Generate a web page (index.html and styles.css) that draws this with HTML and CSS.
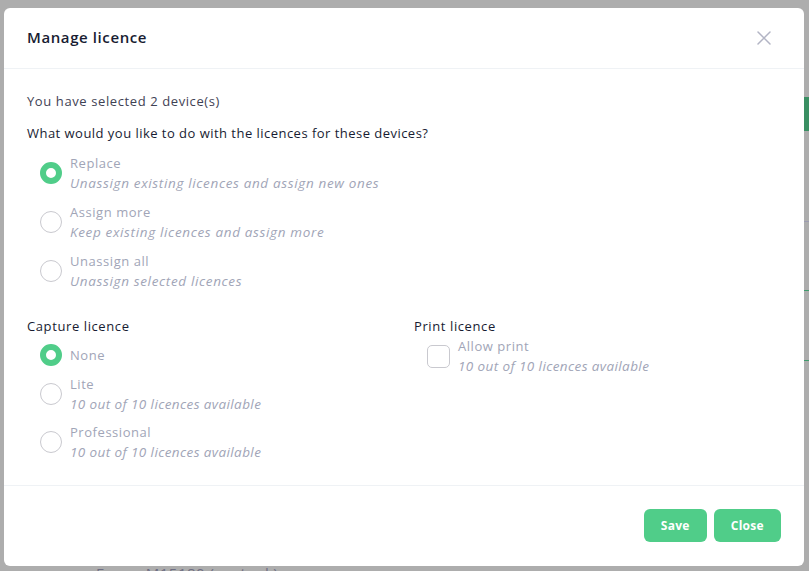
FILE: index.html
```html
<!DOCTYPE html>
<html lang="en">
<head>
<meta charset="utf-8">
<title>Manage licence</title>
<link rel="stylesheet" href="styles.css">
</head>
<body>
<div class="backdrop">
  <div class="peek-btn"></div>
  <div class="peek-line l1"></div>
  <div class="peek-line l2"></div>
  <div class="peek-line l3"></div>
  <div class="peek-text">Epson M15180 (ecotank)</div>
</div>
<div class="modal">
  <div class="modal-header">
    <h2 class="modal-title">Manage licence</h2>
    <button class="close-x" aria-label="Close">
      <svg width="14" height="14" viewBox="0 0 14 14"><path d="M1 1 L13 13 M13 1 L1 13" stroke="#b2b4c4" stroke-width="1.5" stroke-linecap="round"/></svg>
    </button>
  </div>
  <div class="modal-body">
    <p class="info">You have selected 2 device(s)</p>
    <p class="question">What would you like to do with the licences for these devices?</p>
    <div class="options">
      <label class="opt">
        <span class="radio checked"></span>
        <span class="opt-text"><span class="opt-label">Replace</span><span class="opt-desc">Unassign existing licences and assign new ones</span></span>
      </label>
      <label class="opt">
        <span class="radio"></span>
        <span class="opt-text"><span class="opt-label">Assign more</span><span class="opt-desc">Keep existing licences and assign more</span></span>
      </label>
      <label class="opt">
        <span class="radio"></span>
        <span class="opt-text"><span class="opt-label">Unassign all</span><span class="opt-desc">Unassign selected licences</span></span>
      </label>
    </div>
    <div class="cols">
      <div class="col">
        <h3 class="section">Capture licence</h3>
        <div class="options sub">
          <label class="opt">
            <span class="radio checked"></span>
            <span class="opt-text"><span class="opt-label">None</span></span>
          </label>
          <label class="opt">
            <span class="radio"></span>
            <span class="opt-text"><span class="opt-label">Lite</span><span class="opt-desc num">10 out of 10 licences available</span></span>
          </label>
          <label class="opt">
            <span class="radio"></span>
            <span class="opt-text"><span class="opt-label">Professional</span><span class="opt-desc num">10 out of 10 licences available</span></span>
          </label>
        </div>
      </div>
      <div class="col">
        <h3 class="section">Print licence</h3>
        <div class="options">
          <label class="opt">
            <span class="check"></span>
            <span class="opt-text"><span class="opt-label">Allow print</span><span class="opt-desc num">10 out of 10 licences available</span></span>
          </label>
        </div>
      </div>
    </div>
  </div>
  <div class="modal-footer">
    <button class="btn">Save</button>
    <button class="btn">Close</button>
  </div>
</div>
</body>
</html>
```
FILE: styles.css
```css
* { box-sizing: border-box; }
html, body { margin: 0; padding: 0; }
body {
  width: 809px;
  height: 571px;
  overflow: hidden;
  background: #adadad;
  font-family: "Open Sans", "Noto Sans", sans-serif;
  letter-spacing: 0.5px;
  position: relative;
}
.backdrop { position: absolute; inset: 0; }
.peek-btn { position: absolute; left: 803px; top: 97px; width: 10px; height: 34px; background: #3a8f63; }
.peek-line { position: absolute; left: 803px; width: 10px; height: 1px; background: #3f9a6c; }
.peek-line.l1 { top: 221px; background: #9c9cb0; }
.peek-line.l2 { top: 290px; }
.peek-line.l3 { top: 360px; }
.peek-text { position: absolute; left: 96px; top: 564px; font-size: 15px; line-height: 18px; color: #3a3a60; opacity: .55; }

.modal {
  position: relative;
  margin: 8px 0 0 4px;
  width: 800px;
  height: 558px;
  background: #fff;
  border-radius: 6px;
  display: flex;
  flex-direction: column;
}
.modal-header {
  height: 61px;
  border-bottom: 1px solid #eff2f5;
  display: flex;
  align-items: center;
  justify-content: space-between;
  padding: 0 33px 0 23px;
}
.modal-title {
  margin: 0 0 2px;
  font-size: 15px;
  font-weight: 600;
  letter-spacing: 0.6px;
  color: #181c32;
}
.close-x {
  border: 0; background: none; padding: 0; width: 14px; height: 14px; display: block; margin-top: -1px;
}
.close-x svg { display: block; }
.modal-body {
  flex: 1;
  padding: 22px 23px 0;
}
.info {
  margin: 0;
  font-size: 13px;
  line-height: 20px;
  letter-spacing: 0.6px;
  color: #3f4254;
}
.question {
  margin: 12px 0 0;
  font-size: 13px;
  line-height: 20px;
  font-weight: 500;
  letter-spacing: 0.47px;
  color: #181c32;
}
.options {
  display: flex;
  flex-direction: column;
  gap: 9px;
  padding-left: 13px;
  margin-top: 10px;
}
.options.sub { margin-top: 8px; gap: 8px; }
.opt {
  display: flex;
  align-items: center;
  gap: 8px;
}
.radio {
  flex: none;
  width: 22px;
  height: 22px;
  border-radius: 50%;
  border: 1px solid #c9c9cf;
  background: #fff;
}
.radio.checked {
  border: 6.5px solid #50cd89;
  background: #fff;
}
.check {
  flex: none;
  width: 23px;
  height: 23px;
  border-radius: 5px;
  border: 1px solid #c9c9cf;
}
.opt-text { display: flex; flex-direction: column; }
.opt-label {
  font-size: 13px;
  line-height: 20px;
  letter-spacing: 0.55px;
  color: #a1a5b7;
}
.opt-desc {
  font-size: 13.5px;
  line-height: 20px;
  font-style: italic;
  letter-spacing: 0.65px;
  color: #a1a5b7;
}
.opt-desc.num { letter-spacing: 0.4px; }
.cols {
  display: grid;
  grid-template-columns: 367px 367px;
  column-gap: 20px;
  margin-top: 25px;
}
.section {
  margin: 0;
  font-size: 13px;
  line-height: 20px;
  font-weight: 500;
  letter-spacing: 0.6px;
  color: #181c32;
}
.col .options { margin-top: 0; }
.col .options.sub { margin-top: 8px; }
.modal-footer {
  height: 81px;
  border-top: 1px solid #eff2f5;
  display: flex;
  justify-content: flex-end;
  align-items: flex-start;
  gap: 7px;
  padding: 23px 23px 0;
}
.btn {
  height: 33px;
  padding: 0 17px;
  border: 0;
  border-radius: 6px;
  background: #50cd89;
  color: #fff;
  font-family: inherit;
  font-size: 12px;
  font-weight: 700;
  letter-spacing: 0.3px;
}
```
